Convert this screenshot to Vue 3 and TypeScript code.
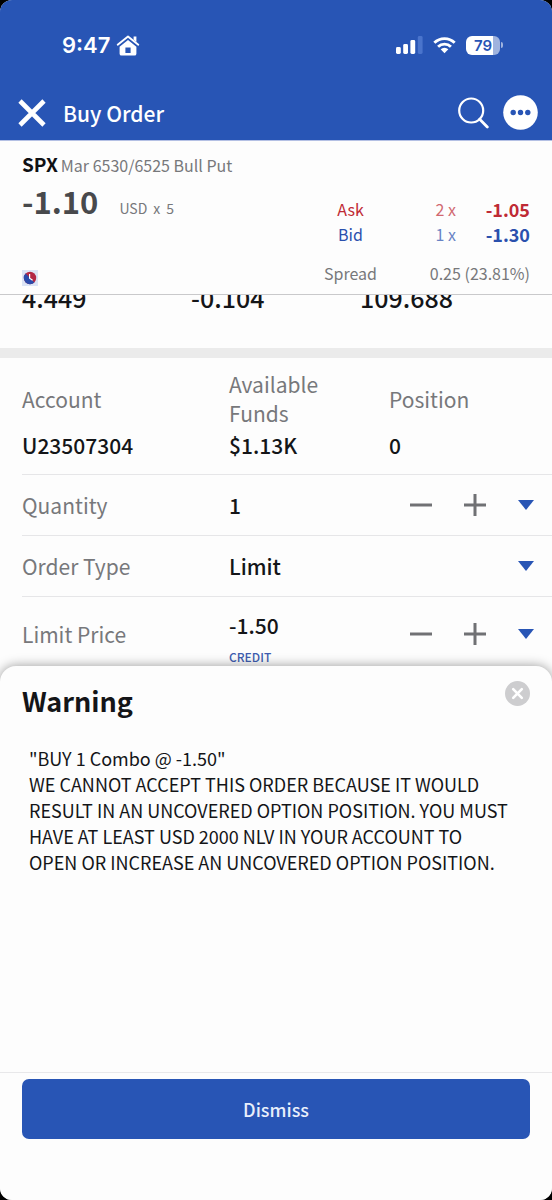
<script setup lang="ts">
import { ref } from 'vue'

interface Quote {
  label: string
  size: string
  price: string
  tone: 'ask' | 'bid'
}

interface AccountField {
  label: string
  value: string
}

const quotes: Quote[] = [
  { label: 'Ask', size: '2 x', price: '-1.05', tone: 'ask' },
  { label: 'Bid', size: '1 x', price: '-1.30', tone: 'bid' },
]

const stats: string[] = ['4.449', '-0.104', '109.688']

const account: AccountField[] = [
  { label: 'Account', value: 'U23507304' },
  { label: 'Available Funds', value: '$1.13K' },
  { label: 'Position', value: '0' },
]

const quantity = ref('1')
const orderType = ref('Limit')
const limitPrice = ref('-1.50')

const step = (value: string, delta: number, digits: number): string =>
  (Number(value) + delta).toFixed(digits)
</script>

<template>
  <div class="screen">
    <header class="top">
      <div class="status">
        <div class="status-left">
          <span class="time">9:47</span>
          <svg class="home" viewBox="0 0 24 21" aria-hidden="true">
            <path d="M1.700 9.700 12 1.400l10.300 8.300" fill="none" stroke="#fff" stroke-width="1.900" stroke-linecap="round" stroke-linejoin="round" />
            <path d="M17.600 1.600h2.800v5.400l-2.800-2.300z" fill="#fff" />
            <path fill-rule="evenodd" d="M12 4.900l8.400 6.800v7a1.900 1.900 0 0 1-1.900 1.900H5.500A1.900 1.900 0 0 1 3.600 18.700v-7zM9.400 12.400v5.600h5.200v-5.600z" fill="#fff" />
          </svg>
        </div>
        <div class="status-right">
          <svg class="signal" viewBox="0 0 27 18" aria-hidden="true">
            <rect x="0" y="11" width="4.800" height="7" rx="1.400" fill="#fff" />
            <rect x="7.200" y="8" width="4.800" height="10" rx="1.400" fill="#fff" />
            <rect x="14.400" y="4" width="4.800" height="14" rx="1.400" fill="#fff" />
            <rect x="21.800" y="0" width="4.800" height="18" rx="1.400" fill="#4a74cc" />
          </svg>
          <svg class="wifi" viewBox="0 0 24 18" aria-hidden="true">
            <g fill="none" stroke="#fff" stroke-width="3">
              <path d="M1.400 6.700a15 15 0 0 1 21.200 0" />
              <path d="M5.300 10.900a9.500 9.500 0 0 1 13.400 0" />
            </g>
            <path d="M12 17.500l-4-4.100a5.700 5.700 0 0 1 8 0z" fill="#fff" />
          </svg>
          <div class="battery"><span class="level">79</span><span class="tip"></span></div>
        </div>
      </div>
      <nav class="nav">
        <button class="icon-button" type="button" aria-label="Close">
          <svg class="cross" viewBox="0 0 28 28" aria-hidden="true">
            <path d="M2 2l24 24M26 2l-24 24" stroke="#fff" stroke-width="4.600" />
          </svg>
        </button>
        <h1 class="title">Buy Order</h1>
        <button class="icon-button" type="button" aria-label="Search">
          <svg class="search" viewBox="0 0 32 32" aria-hidden="true">
            <circle cx="14.200" cy="13.500" r="12" fill="none" stroke="#fff" stroke-width="2.200" />
            <path d="M22.700 22.300l7.600 7.600" stroke="#fff" stroke-width="2.800" stroke-linecap="round" />
          </svg>
        </button>
        <button class="icon-button" type="button" aria-label="More">
          <svg class="more" viewBox="0 0 35 35" aria-hidden="true">
            <circle cx="17.500" cy="17.500" r="17.300" fill="#fff" />
            <g fill="#2855b5">
              <circle cx="10.200" cy="17.500" r="2.700" />
              <circle cx="17.500" cy="17.500" r="2.700" />
              <circle cx="24.800" cy="17.500" r="2.700" />
            </g>
          </svg>
        </button>
      </nav>
    </header>

    <section class="quote">
      <p class="contract"><strong class="symbol">SPX</strong><span>Mar 6530/6525 Bull Put</span></p>
      <div class="quote-body">
        <div class="last">
          <p class="last-line">
            <strong class="price">-1.10</strong>
            <span class="unit"><span>USD</span> <span>x</span> <span>5</span></span>
          </p>
          <svg class="clock" viewBox="0 0 16 16" aria-hidden="true">
            <rect width="16" height="16" fill="#dbe4f6" />
            <circle cx="8" cy="8" r="6.200" fill="#b32745" />
            <path d="M3.600 3.600A6.200 6.200 0 1 0 12.400 12.400z" fill="#2a4bab" />
            <path d="M7.600 4v4.300l3 2" fill="none" stroke="#fff" stroke-width="1.200" />
          </svg>
        </div>
        <table class="book">
          <tbody>
            <tr v-for="q in quotes" :key="q.label" :class="q.tone">
              <th scope="row">{{ q.label }}</th>
              <td class="size">{{ q.size }}</td>
              <td class="level-price">{{ q.price }}</td>
            </tr>
            <tr class="spread">
              <th scope="row">Spread</th>
              <td colspan="2">0.25 (23.81%)</td>
            </tr>
          </tbody>
        </table>
      </div>
    </section>

    <section class="stats">
      <span v-for="s in stats" :key="s">{{ s }}</span>
    </section>

    <form class="order" @submit.prevent>
      <dl class="account">
        <div v-for="f in account" :key="f.label" class="field">
          <dt><span>{{ f.label }}</span></dt>
          <dd>{{ f.value }}</dd>
        </div>
      </dl>

      <div class="row">
        <label for="quantity">Quantity</label>
        <input id="quantity" v-model="quantity" class="value" type="text" />
        <div class="controls">
          <button type="button" class="step" aria-label="Decrease quantity" @click="quantity = step(quantity, -1, 0)">
            <svg viewBox="0 0 22 22" aria-hidden="true"><path d="M0 11h22" /></svg>
          </button>
          <button type="button" class="step" aria-label="Increase quantity" @click="quantity = step(quantity, 1, 0)">
            <svg viewBox="0 0 22 22" aria-hidden="true"><path d="M0 11h22M11 0v22" /></svg>
          </button>
          <button type="button" class="caret" aria-label="Quantity presets">
            <svg viewBox="0 0 16 10" aria-hidden="true"><path d="M0 0h16L8 10z" /></svg>
          </button>
        </div>
      </div>

      <div class="row">
        <label for="order-type">Order Type</label>
        <select id="order-type" v-model="orderType" class="value">
          <option>Limit</option>
          <option>Market</option>
        </select>
        <div class="controls">
          <span class="caret">
            <svg viewBox="0 0 16 10" aria-hidden="true"><path d="M0 0h16L8 10z" /></svg>
          </span>
        </div>
      </div>

      <div class="row limit">
        <label for="limit-price">Limit Price</label>
        <div class="limit-value">
          <input id="limit-price" v-model="limitPrice" class="value" type="text" />
          <span class="credit">CREDIT</span>
        </div>
        <div class="controls">
          <button type="button" class="step" aria-label="Decrease price" @click="limitPrice = step(limitPrice, -0.05, 2)">
            <svg viewBox="0 0 22 22" aria-hidden="true"><path d="M0 11h22" /></svg>
          </button>
          <button type="button" class="step" aria-label="Increase price" @click="limitPrice = step(limitPrice, 0.05, 2)">
            <svg viewBox="0 0 22 22" aria-hidden="true"><path d="M0 11h22M11 0v22" /></svg>
          </button>
          <button type="button" class="caret" aria-label="Price presets">
            <svg viewBox="0 0 16 10" aria-hidden="true"><path d="M0 0h16L8 10z" /></svg>
          </button>
        </div>
      </div>
    </form>

    <section class="sheet" role="alertdialog" aria-labelledby="warning-title">
      <div class="sheet-head">
        <h2 id="warning-title">Warning</h2>
        <button class="icon-button" type="button" aria-label="Close warning">
          <svg class="dismiss-icon" viewBox="0 0 25 25" aria-hidden="true">
            <circle cx="12.500" cy="12.500" r="12.500" fill="#cdcdcf" />
            <path d="M8.200 8.200l8.600 8.600M16.800 8.200l-8.600 8.600" stroke="#fff" stroke-width="2.600" stroke-linecap="round" />
          </svg>
        </button>
      </div>
      <p class="message">
        "BUY 1 Combo @ -1.50"<br />
        WE CANNOT ACCEPT THIS ORDER BECAUSE IT WOULD RESULT IN AN UNCOVERED OPTION POSITION. YOU MUST HAVE AT LEAST USD 2000 NLV IN YOUR ACCOUNT TO OPEN OR INCREASE AN UNCOVERED OPTION POSITION.
      </p>
      <footer class="sheet-foot">
        <button class="dismiss" type="button">Dismiss</button>
      </footer>
    </section>
  </div>
</template>

<style>
body {
  background: #000;
}
</style>

<style scoped>
* {
  box-sizing: border-box;
  margin: 0;
  padding: 0;
}

.screen {
  display: flex;
  flex-direction: column;
  min-height: 100vh;
  overflow: hidden;
  border-radius: 12px;
  background: #fdfdfd;
  color: #141518;
  font-family: "Noto Sans CJK SC", "Noto Sans", sans-serif;
  font-size: 21px;
  line-height: 28px;
}

svg {
  display: block;
}

button,
input,
select {
  border: 0;
  background: none;
  color: inherit;
  font: inherit;
  appearance: none;
}

.top {
  background: #2855b5;
  color: #fff;
  border-bottom: 1px solid #b4c0e4;
}

.status {
  display: flex;
  align-items: center;
  justify-content: space-between;
  padding: 30px 49px 0 62px;
}

.status-left,
.status-right {
  display: flex;
  align-items: center;
  height: 30px;
}

.status-left {
  gap: 6px;
}

.status-right {
  gap: 10px;
}

.time {
  font-family: Inter, sans-serif;
  font-size: 22px;
  font-weight: 600;
}

.home {
  width: 24px;
  height: 21px;
}

.signal {
  width: 27px;
  height: 18px;
}

.wifi {
  width: 23px;
  height: 18px;
}

.battery {
  display: flex;
  align-items: center;
  gap: 1px;
}

.level {
  width: 34px;
  border-radius: 6px;
  background: linear-gradient(90deg, #fff 79%, #9fb3de 79%);
  color: #2855b5;
  font-family: Inter, sans-serif;
  font-size: 15px;
  font-weight: 600;
  line-height: 19px;
  text-align: center;
}

.tip {
  width: 2px;
  height: 6px;
  border-radius: 0 2px 2px 0;
  background: #9fb3de;
}

.nav {
  display: flex;
  align-items: center;
  padding: 35px 14px 10px 18px;
  gap: 14px;
}

.title {
  flex: 1;
  padding-left: 3px;
  font-size: 21px;
  font-weight: 500;
}

.cross {
  width: 28px;
  height: 28px;
}

.search {
  width: 32px;
  height: 32px;
}

.more {
  width: 35px;
  height: 35px;
}

.quote {
  position: relative;
  z-index: 1;
  padding: 9px 22px 8px;
  border-bottom: 1px solid #c9c9cb;
  background: #fdfdfd;
}

.contract {
  display: flex;
  align-items: baseline;
  gap: 3px;
  color: #77787b;
  font-size: 16px;
}

.symbol {
  color: #101114;
  font-size: 19px;
  font-weight: 700;
}

.quote-body {
  display: flex;
  justify-content: space-between;
}

.last {
  display: flex;
  flex-direction: column;
  justify-content: space-between;
}

.last-line {
  display: flex;
  align-items: baseline;
  gap: 21px;
  line-height: 44px;
}

.price {
  color: #48494c;
  font-size: 31px;
  font-weight: 700;
}

.unit {
  display: flex;
  gap: 6px;
  color: #77787b;
  font-size: 14px;
}

.clock {
  width: 16px;
  height: 16px;
}

.book {
  margin-top: 18px;
  border-collapse: collapse;
  font-size: 16px;
  line-height: 25px;
}

.book th {
  width: 53px;
  font-weight: 400;
  text-align: center;
}

.book td {
  text-align: right;
}

.size {
  width: 79px;
  opacity: 0.7;
}

.level-price {
  width: 74px;
  font-size: 18px;
  font-weight: 700;
}

.ask {
  color: #bf2a35;
}

.bid {
  color: #2a50ad;
}

.spread {
  color: #77787b;
}

.spread th,
.spread td {
  padding-top: 14px;
}

.stats {
  display: grid;
  grid-template-columns: 169fr 169fr 192fr;
  margin-top: -12px;
  padding: 0 0 37px 22px;
  font-size: 25px;
  font-weight: 500;
}

.order {
  border-top: 10px solid #ebebeb;
}

.account,
.row {
  display: grid;
  grid-template-columns: 207fr 160fr 163fr;
  margin-left: 22px;
}

.account {
  padding: 12px 0 14px;
}

.field {
  display: flex;
  flex-direction: column;
  gap: 2px;
}

.field dt {
  display: flex;
  flex: 1;
  align-items: center;
  color: #77787b;
  line-height: 29px;
}

.field dt span {
  max-width: 110px;
}

.field dd {
  line-height: 30px;
  font-weight: 500;
}

.row {
  align-items: center;
  min-height: 61px;
  border-top: 1px solid #e6e6e8;
}

.row label {
  color: #77787b;
}

.value {
  width: 100%;
  height: 30px;
  font-weight: 500;
}

.controls {
  display: flex;
  align-items: center;
  justify-content: flex-end;
  padding-right: 18px;
}

.step {
  margin-right: 32px;
}

.step svg {
  width: 22px;
  height: 22px;
  stroke: #707174;
  stroke-width: 3;
}

.caret svg {
  width: 16px;
  height: 10px;
  fill: #2855b5;
}

.limit {
  padding-top: 4px;
}

.limit-value {
  display: flex;
  flex-direction: column;
  gap: 8px;
  padding-top: 9px;
}

.credit {
  color: #3f5db0;
  font-size: 12px;
  font-weight: 500;
  line-height: 18px;
}

.sheet {
  position: relative;
  z-index: 1;
  display: flex;
  flex: 1;
  flex-direction: column;
  border-radius: 16px 16px 0 0;
  background: #fdfdfd;
  box-shadow: 0 0 12px rgba(0, 0, 0, 0.4);
}

.sheet-head {
  display: flex;
  align-items: flex-start;
  justify-content: space-between;
  padding: 15px 22px 0;
}

.sheet-head h2 {
  font-size: 27px;
  font-weight: 700;
  line-height: 40px;
}

.dismiss-icon {
  width: 25px;
  height: 25px;
}

.message {
  flex: 1;
  padding: 24px 41px 24px 29px;
  font-size: 18px;
  line-height: 26px;
}

.sheet-foot {
  padding: 6px 22px 61px;
  border-top: 1px solid #e8e8ea;
}

.dismiss {
  width: 100%;
  height: 60px;
  border-radius: 7px;
  background: #2855b5;
  color: #e9effb;
  font-size: 18px;
  font-weight: 500;
}
</style>
